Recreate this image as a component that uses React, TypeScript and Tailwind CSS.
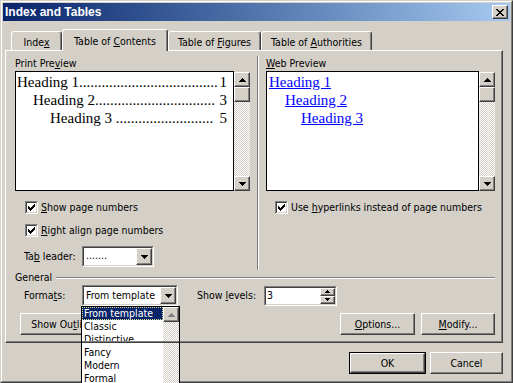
import React from "react";

const RAISED =
  "border border-t-white border-l-white border-r-[#404040] border-b-[#404040] shadow-[inset_-1px_-1px_#808080] bg-[#d4d0c8]";

function Sunken({ className, children }: { className: string; children?: React.ReactNode }) {
  return (
    <div className={`border border-t-[#808080] border-l-[#808080] border-r-white border-b-white ${className}`}>
      <div className="h-full w-full border border-t-[#404040] border-l-[#404040] border-r-[#d4d0c8] border-b-[#d4d0c8] bg-white flex items-center">
        {children}
      </div>
    </div>
  );
}

function DownArrow({ color = "#000" }: { color?: string }) {
  return (
    <svg width="7" height="4" shapeRendering="crispEdges" fill={color}>
      <rect x="0" y="0" width="7" height="1" />
      <rect x="1" y="1" width="5" height="1" />
      <rect x="2" y="2" width="3" height="1" />
      <rect x="3" y="3" width="1" height="1" />
    </svg>
  );
}

function UpArrow({ color = "#000" }: { color?: string }) {
  return (
    <svg width="7" height="4" shapeRendering="crispEdges" fill={color}>
      <rect x="3" y="0" width="1" height="1" />
      <rect x="2" y="1" width="3" height="1" />
      <rect x="1" y="2" width="5" height="1" />
      <rect x="0" y="3" width="7" height="1" />
    </svg>
  );
}

function SmallUp() {
  return (
    <svg width="5" height="3" shapeRendering="crispEdges" fill="#000">
      <rect x="2" y="0" width="1" height="1" />
      <rect x="1" y="1" width="3" height="1" />
      <rect x="0" y="2" width="5" height="1" />
    </svg>
  );
}
function SmallDown() {
  return (
    <svg width="5" height="3" shapeRendering="crispEdges" fill="#000">
      <rect x="0" y="0" width="5" height="1" />
      <rect x="1" y="1" width="3" height="1" />
      <rect x="2" y="2" width="1" height="1" />
    </svg>
  );
}

function Checkbox() {
  const rows: [number, number, number][] = [
    [6, 0, 1],
    [5, 1, 2],
    [0, 2, 1],
    [4, 2, 3],
    [0, 3, 2],
    [3, 3, 3],
    [0, 4, 5],
    [1, 5, 3],
    [2, 6, 1],
  ];
  return (
    <Sunken className="w-[13px] h-[13px] shrink-0">
      <svg width="9" height="9" shapeRendering="crispEdges" fill="#000">
        {rows.map(([x, y, w], i) => (
          <rect key={i} x={x + 1} y={y + 1} width={w} height={1} />
        ))}
      </svg>
    </Sunken>
  );
}

function CloseX() {
  const rows: [number, number, number][] = [
    [0, 0, 2],
    [6, 0, 2],
    [1, 1, 2],
    [5, 1, 2],
    [2, 2, 4],
    [3, 3, 2],
    [2, 4, 4],
    [1, 5, 2],
    [5, 5, 2],
    [0, 6, 2],
    [6, 6, 2],
  ];
  return (
    <svg width="8" height="7" shapeRendering="crispEdges" fill="#000">
      {rows.map(([x, y, w], i) => (
        <rect key={i} x={x} y={y} width={w} height={1} />
      ))}
    </svg>
  );
}

function ScrollBar({ className }: { className: string }) {
  return (
    <div className={`flex flex-col w-[16px] ${className}`}>
      <div className={`${RAISED} h-[15px] flex items-center justify-center`}>
        <UpArrow />
      </div>
      <div className={`${RAISED} h-[15px]`} />
      <div className="flex-1 bg-[repeating-conic-gradient(#ffffff_0_25%,#d4d0c8_0_50%)] bg-[length:2px_2px]" />
      <div className={`${RAISED} h-[15px] flex items-center justify-center`}>
        <DownArrow />
      </div>
    </div>
  );
}

function TocLine({ pad, label, dots, num }: { pad: string; label: string; dots: number; num: string }) {
  return (
    <div className={`flex h-[18px] items-center ${pad} pr-[6px]`}>
      <span className="whitespace-nowrap">
        {label}
        {".".repeat(dots)}
      </span>
      <span className="ml-auto">{num}</span>
    </div>
  );
}

function Tab({ className, children, selected }: { className: string; children: React.ReactNode; selected?: boolean }) {
  return (
    <div
      className={`${className} flex justify-center bg-[#d4d0c8] border-t border-l border-r border-t-white border-l-white border-r-[#404040] rounded-t-[3px] ${
        selected
          ? "relative z-10 h-[22px] pt-[5px] shadow-[inset_-1px_0_#808080]"
          : "mt-[2px] h-[19px] pt-[4px] shadow-[inset_-1px_0_#808080]"
      }`}
    >
      <span>{children}</span>
    </div>
  );
}

function Btn({ className, children }: { className: string; children: React.ReactNode }) {
  return <div className={`${RAISED} ${className} flex items-center justify-center`}>{children}</div>;
}

export default function App() {
  return (
    <div className="relative w-[513px] h-[383px] overflow-hidden bg-[#d4d0c8] font-['DejaVu_Sans_Condensed','Liberation_Sans',Arial,sans-serif] text-[10.5px] leading-[13px] text-black">
      <div className="h-[383px] border border-t-[#d4d0c8] border-l-[#d4d0c8] border-r-[#404040] border-b-[#404040]">
        <div className="h-full border border-t-white border-l-white border-r-[#808080] border-b-[#808080] p-px flex flex-col">
          {/* Title bar */}
          <div className="h-[18px] shrink-0 flex items-center justify-between bg-linear-to-r from-[#0a246a] to-[#a6caf0] pl-[2px] pr-[2px]">
            <span className="text-white font-bold text-[12px] leading-[14px] font-['Liberation_Sans',Arial,sans-serif]">
              Index and Tables
            </span>
            <div className={`${RAISED} w-[16px] h-[14px] flex items-center justify-center`}>
              <CloseX />
            </div>
          </div>

          {/* Tabs */}
          <div className="flex items-start pl-[8px] mt-[8px] h-[21px] shrink-0">
            <Tab className="w-[51px]">
              Inde<u className="underline">x</u>
            </Tab>
            <Tab className="w-[106px]" selected>
              Table of <u className="underline">C</u>ontents
            </Tab>
            <Tab className="w-[93px]">
              Table of <u className="underline">F</u>igures
            </Tab>
            <Tab className="w-[111px]">
              Table of <u className="underline">A</u>uthorities
            </Tab>
          </div>

          {/* Panel */}
          <div className="ml-[2px] w-[498px] h-[293px] shrink-0 border border-t-white border-l-white border-r-[#404040] border-b-[#404040]">
            <div className="h-full border-r border-b border-r-[#808080] border-b-[#808080] flex flex-col">
              <div className="flex h-[219px] pl-[9px] shrink-0">
                {/* Left column */}
                <div className="w-[235px] pt-[6px] flex flex-col">
                  <div className="h-[14px]">
                    Print Pre<u className="underline">v</u>iew
                  </div>
                  <div className="flex h-[120px]">
                    <div className="w-[219px] h-full border border-black bg-white font-['Liberation_Serif','Times_New_Roman',serif] text-[15px] leading-[18px] pt-[1px]">
                      <TocLine pad="pl-[1px]" label="Heading 1" dots={37} num="1" />
                      <TocLine pad="pl-[17px]" label="Heading 2" dots={32} num="3" />
                      <TocLine pad="pl-[34px]" label="Heading 3 " dots={26} num="5" />
                    </div>
                    <ScrollBar className="mt-[1px] h-[119px]" />
                  </div>
                  <div className="flex items-center h-[13px] mt-[10px] pl-[10px]">
                    <Checkbox />
                    <span className="ml-[3px]">
                      <u className="underline">S</u>how page numbers
                    </span>
                  </div>
                  <div className="flex items-center h-[13px] mt-[10px] pl-[10px]">
                    <Checkbox />
                    <span className="ml-[3px]">
                      <u className="underline">R</u>ight align page numbers
                    </span>
                  </div>
                  <div className="flex items-center h-[21px] mt-[9px] pl-[9px]">
                    <span className="w-[58px]">
                      Ta<u className="underline">b</u> leader:
                    </span>
                    <Sunken className="w-[72px] h-[21px]">
                      <span className="flex-1 pl-[2px] pb-[3px]">.......</span>
                      <div className={`${RAISED} w-[16px] h-full flex items-center justify-center`}>
                        <DownArrow />
                      </div>
                    </Sunken>
                  </div>
                </div>

                {/* Separator */}
                <div className="mt-[5px] ml-[7px] mr-[7px] w-[2px] h-[214px] border-l border-r border-l-[#808080] border-r-white" />

                {/* Right column */}
                <div className="w-[229px] pt-[6px] flex flex-col">
                  <div className="h-[14px]">
                    <u className="underline">W</u>eb Preview
                  </div>
                  <div className="flex h-[120px]">
                    <div className="w-[213px] h-full border border-black bg-white font-['Liberation_Serif','Times_New_Roman',serif] text-[15px] leading-[18px] pt-[1px] text-[#0000ff]">
                      <div className="h-[18px] flex items-center pl-[2px]">
                        <span className="underline">Heading 1</span>
                      </div>
                      <div className="h-[18px] flex items-center pl-[18px]">
                        <span className="underline">Heading 2</span>
                      </div>
                      <div className="h-[18px] flex items-center pl-[34px]">
                        <span className="underline">Heading 3</span>
                      </div>
                    </div>
                    <ScrollBar className="mt-[1px] h-[119px]" />
                  </div>
                  <div className="flex items-center h-[13px] mt-[10px] pl-[9px]">
                    <Checkbox />
                    <span className="ml-[3px]">
                      Use <u className="underline">h</u>yperlinks instead of page numbers
                    </span>
                  </div>
                </div>
              </div>

              {/* General */}
              <div className="flex items-center h-[13px] mt-[1px] pl-[9px] pr-[6px]">
                <span>General</span>
                <div className="flex-1 ml-[4px] h-[2px] border-t border-b border-t-[#808080] border-b-white" />
              </div>

              <div className="flex items-center h-[21px] mt-[1px] pl-[18px]">
                <span className="w-[58px]">
                  Forma<u className="underline">t</u>s:
                </span>
                <Sunken className="w-[96px] h-[21px]">
                  <span className="flex-1 pl-[2px]">From template</span>
                  <div className={`${RAISED} w-[16px] h-full flex items-center justify-center`}>
                    <DownArrow />
                  </div>
                </Sunken>
                <span className="ml-[19px] w-[67px]">
                  Show <u className="underline">l</u>evels:
                </span>
                <Sunken className="w-[73px] h-[20px]">
                  <span className="flex-1 pl-[1px]">3</span>
                  <div className="w-[15px] h-full flex flex-col">
                    <div className={`${RAISED} flex-1 flex items-center justify-center`}>
                      <SmallUp />
                    </div>
                    <div className={`${RAISED} flex-1 flex items-center justify-center`}>
                      <SmallDown />
                    </div>
                  </div>
                </Sunken>
              </div>

              <div className="flex items-center h-[22px] mt-[7px] pl-[14px] pr-[6px]">
                <Btn className="w-[94px] h-[22px]">
                  <span>
                    Show Ou<u className="underline">t</u>line...
                  </span>
                </Btn>
                <Btn className="ml-auto w-[75px] h-[22px]">
                  <span>
                    <u className="underline">O</u>ptions...
                  </span>
                </Btn>
                <Btn className="ml-[6px] w-[74px] h-[22px]">
                  <span>
                    <u className="underline">M</u>odify...
                  </span>
                </Btn>
              </div>
            </div>
          </div>

          {/* Bottom buttons */}
          <div className="ml-[2px] w-[498px] mt-[9px] flex justify-end gap-[4px]">
            <div className="w-[77px] h-[22px] border border-black">
              <Btn className="w-full h-full">
                <span>OK</span>
              </Btn>
            </div>
            <Btn className="w-[73px] h-[22px]">
              <span>Cancel</span>
            </Btn>
          </div>
        </div>
      </div>

      {/* Open dropdown list */}
      <div className="absolute left-[81px] top-[306px] w-[99px] h-[90px] border border-black bg-white z-20 flex">
        <div className="w-[81px] flex flex-col">
          <div className="h-[13px] bg-[#0a246a] text-white border border-dotted border-[#e8e090] pl-[1px] leading-[11px]">
            From template
          </div>
          <div className="h-[13px] pl-[2px]">Classic</div>
          <div className="h-[13px] pl-[2px]">Distinctive</div>
          <div className="h-[13px] pl-[2px]">Fancy</div>
          <div className="h-[13px] pl-[2px]">Modern</div>
          <div className="h-[13px] pl-[2px]">Formal</div>
        </div>
        <div className="w-[16px] flex flex-col">
          <div className={`${RAISED} h-[15px] flex items-center justify-center`}>
            <UpArrow color="#808080" />
          </div>
          <div className="flex-1 bg-[repeating-conic-gradient(#ffffff_0_25%,#d4d0c8_0_50%)] bg-[length:2px_2px]" />
        </div>
        <div className="absolute left-0 right-0 top-[34px] h-[2px] border-t border-b border-t-[#808080] border-b-[#404040]" />
      </div>
    </div>
  );
}
